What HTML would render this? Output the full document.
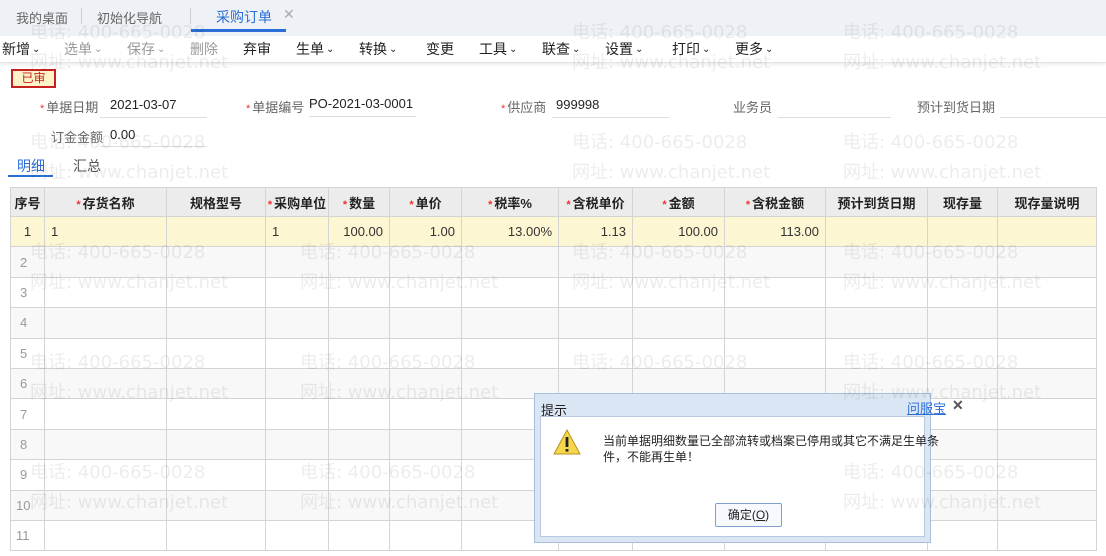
<!DOCTYPE html><html><head><meta charset="utf-8"><style>
*{margin:0;padding:0;box-sizing:border-box}
body{width:1106px;height:556px;overflow:hidden;background:#fff;font-family:"Liberation Sans","Noto Sans CJK SC",sans-serif;font-size:13px;color:#333;position:relative}
.abs{position:absolute;white-space:nowrap}
.wm{position:absolute;font-size:18px;color:rgba(0,0,0,0.075);letter-spacing:0;white-space:nowrap;z-index:5;pointer-events:none;font-family:"DejaVu Sans","Noto Sans CJK SC",sans-serif}
.star{color:#e33;font-size:11px;margin-right:2px}
table{position:absolute;left:10px;top:187px;border-collapse:collapse;table-layout:fixed}
td,th{border:1px solid #d4d4d4;height:30.4px;font-size:13px;padding:0 6px;white-space:nowrap}
th{background:#ececec;font-weight:bold;color:#222;height:29px}
tr.r1 td{background:#fdf6d2}
tr.alt td{background:#f8f8f8}
.num{text-align:right}
.lbl{color:#666}
.uline{position:absolute;height:1px;background:#ddd}
.tb{top:39px;font-size:14px;color:#222}
.tb i{font-style:normal;font-size:10px;vertical-align:2px;margin-left:2px}
</style></head><body>
<div class="abs" style="left:0;top:0;width:1106px;height:36px;background:#eef1f6"></div>
<div class="abs" style="left:16px;top:8px;color:#666">我的桌面</div>
<div class="abs" style="left:81px;top:8px;width:1px;height:16px;background:#ccc"></div>
<div class="abs" style="left:97px;top:8px;color:#666">初始化导航</div>
<div class="abs" style="left:190px;top:8px;width:1px;height:16px;background:#ccc"></div>
<div class="abs" style="left:216px;top:7px;color:#2b6fd6;font-size:14px">采购订单</div>
<div class="abs" style="left:283px;top:6px;color:#aaa;font-size:14px">✕</div>
<div class="abs" style="left:191px;top:29px;width:95px;height:3px;background:#2b6fd6"></div>
<div class="abs" style="left:0;top:36px;width:1106px;height:27px;background:#fff;border-bottom:1px solid #e4e4e4;box-shadow:0 2px 3px #eee"></div>
<div class="abs tb" style="left:2px">新增<i>⌄</i></div>
<div class="abs tb" style="left:64px;color:#999">选单<i>⌄</i></div>
<div class="abs tb" style="left:127px;color:#999">保存<i>⌄</i></div>
<div class="abs tb" style="left:190px;color:#999">删除</div>
<div class="abs tb" style="left:243px">弃审</div>
<div class="abs tb" style="left:296px">生单<i>⌄</i></div>
<div class="abs tb" style="left:359px">转换<i>⌄</i></div>
<div class="abs tb" style="left:426px">变更</div>
<div class="abs tb" style="left:479px">工具<i>⌄</i></div>
<div class="abs tb" style="left:542px">联查<i>⌄</i></div>
<div class="abs tb" style="left:605px">设置<i>⌄</i></div>
<div class="abs tb" style="left:672px">打印<i>⌄</i></div>
<div class="abs tb" style="left:735px">更多<i>⌄</i></div>
<div class="abs" style="left:11px;top:69px;width:45px;height:19px;border:2px solid #c62020;background:#fdf2c8;color:#c62020;font-size:12px;text-align:center;line-height:15px">已审</div>
<div class="abs lbl" style="left:40px;top:97px"><span class="star">*</span>单据日期</div>
<div class="abs" style="left:110px;top:97px;color:#222">2021-03-07</div><div class="uline" style="left:100px;top:117px;width:107px"></div>
<div class="abs lbl" style="left:246px;top:97px"><span class="star">*</span>单据编号</div>
<div class="abs" style="left:309px;top:96px;color:#222">PO-2021-03-0001</div><div class="uline" style="left:309px;top:116px;width:107px"></div>
<div class="abs lbl" style="left:501px;top:97px"><span class="star">*</span>供应商</div>
<div class="abs" style="left:556px;top:97px;color:#222">999998</div><div class="uline" style="left:552px;top:117px;width:117px"></div>
<div class="abs lbl" style="left:733px;top:97px">业务员</div><div class="uline" style="left:778px;top:117px;width:113px"></div>
<div class="abs lbl" style="left:917px;top:97px">预计到货日期</div><div class="uline" style="left:1000px;top:117px;width:106px"></div>
<div class="abs lbl" style="left:51px;top:127px">订金金额</div>
<div class="abs" style="left:110px;top:127px;color:#222">0.00</div><div class="uline" style="left:100px;top:146px;width:107px"></div>
<div class="abs" style="left:17px;top:156px;color:#2b6fd6;font-size:14px">明细</div>
<div class="abs" style="left:8px;top:175px;width:45px;height:2px;background:#2b6fd6"></div>
<div class="abs" style="left:73px;top:156px;color:#555;font-size:14px">汇总</div>
<table>
<colgroup><col style="width:34px"><col style="width:122px"><col style="width:99px"><col style="width:63px"><col style="width:61px"><col style="width:72px"><col style="width:97px"><col style="width:74px"><col style="width:92px"><col style="width:101px"><col style="width:102px"><col style="width:70px"><col style="width:99px"></colgroup>
<tr><th style="padding:0 2px">序号</th><th><span class="star">*</span>存货名称</th><th>规格型号</th><th style="padding:0 1px"><span class="star">*</span>采购单位</th><th><span class="star">*</span>数量</th><th><span class="star">*</span>单价</th><th><span class="star">*</span>税率%</th><th style="padding:0 2px"><span class="star">*</span>含税单价</th><th><span class="star">*</span>金额</th><th><span class="star">*</span>含税金额</th><th style="padding:0 2px">预计到货日期</th><th>现存量</th><th>现存量说明</th></tr>
<tr class="r1"><td style="text-align:center">1</td><td>1</td><td></td><td>1</td><td class="num">100.00</td><td class="num">1.00</td><td class="num">13.00%</td><td class="num">1.13</td><td class="num">100.00</td><td class="num">113.00</td><td></td><td></td><td></td></tr>
<tr class="alt"><td style="color:#999;padding:0 9px">2</td><td></td><td></td><td></td><td></td><td></td><td></td><td></td><td></td><td></td><td></td><td></td><td></td></tr>
<tr><td style="color:#999;padding:0 9px">3</td><td></td><td></td><td></td><td></td><td></td><td></td><td></td><td></td><td></td><td></td><td></td><td></td></tr>
<tr class="alt"><td style="color:#999;padding:0 9px">4</td><td></td><td></td><td></td><td></td><td></td><td></td><td></td><td></td><td></td><td></td><td></td><td></td></tr>
<tr><td style="color:#999;padding:0 9px">5</td><td></td><td></td><td></td><td></td><td></td><td></td><td></td><td></td><td></td><td></td><td></td><td></td></tr>
<tr class="alt"><td style="color:#999;padding:0 9px">6</td><td></td><td></td><td></td><td></td><td></td><td></td><td></td><td></td><td></td><td></td><td></td><td></td></tr>
<tr><td style="color:#999;padding:0 9px">7</td><td></td><td></td><td></td><td></td><td></td><td></td><td></td><td></td><td></td><td></td><td></td><td></td></tr>
<tr class="alt"><td style="color:#999;padding:0 9px">8</td><td></td><td></td><td></td><td></td><td></td><td></td><td></td><td></td><td></td><td></td><td></td><td></td></tr>
<tr><td style="color:#999;padding:0 9px">9</td><td></td><td></td><td></td><td></td><td></td><td></td><td></td><td></td><td></td><td></td><td></td><td></td></tr>
<tr class="alt"><td style="color:#999;padding:0 5px">10</td><td></td><td></td><td></td><td></td><td></td><td></td><td></td><td></td><td></td><td></td><td></td><td></td></tr>
<tr><td style="color:#999;padding:0 5px">11</td><td></td><td></td><td></td><td></td><td></td><td></td><td></td><td></td><td></td><td></td><td></td><td></td></tr>
</table>
<div class="wm" style="left:30px;top:18px">电话: 400-665-0028</div><div class="wm" style="left:30px;top:48px">网址: www.chanjet.net</div>
<div class="wm" style="left:572px;top:18px">电话: 400-665-0028</div><div class="wm" style="left:572px;top:48px">网址: www.chanjet.net</div>
<div class="wm" style="left:843px;top:18px">电话: 400-665-0028</div><div class="wm" style="left:843px;top:48px">网址: www.chanjet.net</div>
<div class="wm" style="left:30px;top:128px">电话: 400-665-0028</div><div class="wm" style="left:30px;top:158px">网址: www.chanjet.net</div>
<div class="wm" style="left:572px;top:128px">电话: 400-665-0028</div><div class="wm" style="left:572px;top:158px">网址: www.chanjet.net</div>
<div class="wm" style="left:843px;top:128px">电话: 400-665-0028</div><div class="wm" style="left:843px;top:158px">网址: www.chanjet.net</div>
<div class="wm" style="left:30px;top:238px">电话: 400-665-0028</div><div class="wm" style="left:30px;top:268px">网址: www.chanjet.net</div>
<div class="wm" style="left:300px;top:238px">电话: 400-665-0028</div><div class="wm" style="left:300px;top:268px">网址: www.chanjet.net</div>
<div class="wm" style="left:572px;top:238px">电话: 400-665-0028</div><div class="wm" style="left:572px;top:268px">网址: www.chanjet.net</div>
<div class="wm" style="left:843px;top:238px">电话: 400-665-0028</div><div class="wm" style="left:843px;top:268px">网址: www.chanjet.net</div>
<div class="wm" style="left:30px;top:348px">电话: 400-665-0028</div><div class="wm" style="left:30px;top:378px">网址: www.chanjet.net</div>
<div class="wm" style="left:300px;top:348px">电话: 400-665-0028</div><div class="wm" style="left:300px;top:378px">网址: www.chanjet.net</div>
<div class="wm" style="left:572px;top:348px">电话: 400-665-0028</div><div class="wm" style="left:843px;top:348px">电话: 400-665-0028</div><div class="wm" style="left:843px;top:378px">网址: www.chanjet.net</div>
<div class="wm" style="left:30px;top:458px">电话: 400-665-0028</div><div class="wm" style="left:30px;top:488px">网址: www.chanjet.net</div>
<div class="wm" style="left:300px;top:458px">电话: 400-665-0028</div><div class="wm" style="left:300px;top:488px">网址: www.chanjet.net</div>
<div class="wm" style="left:843px;top:458px">电话: 400-665-0028</div><div class="wm" style="left:843px;top:488px">网址: www.chanjet.net</div>
<div class="abs" style="left:534px;top:393px;width:397px;height:150px;background:#dbe6f4;border:1px solid #a9bfdc;z-index:4">
 <div class="abs" style="left:6px;top:6px;font-size:13px;color:#222">提示</div>
 <div class="abs" style="left:372px;top:4px;font-size:13px;color:#2b6fd6;text-decoration:underline">问服宝</div>
 <div class="abs" style="left:417px;top:3px;font-size:14px;color:#555;font-weight:bold">✕</div>
 <div class="abs" style="left:5px;top:22px;width:385px;height:121px;background:#fff;border:1px solid #b8c9e0">
  <svg class="abs" style="left:12px;top:12px" width="28" height="26" viewBox="0 0 28 26"><path d="M14 1 L27 25 L1 25 Z" fill="#f6d64a" stroke="#b89018" stroke-width="1"/><rect x="12.6" y="8" width="2.8" height="10" fill="#222"/><rect x="12.6" y="20" width="2.8" height="2.6" fill="#222"/></svg>
  <div class="abs" style="left:62px;top:16px;font-size:12px;color:#222;line-height:16px">当前单据明细数量已全部流转或档案已停用或其它不满足生单条<br>件，不能再生单！</div>
  <div class="abs" style="left:174px;top:86px;width:67px;height:24px;border:1px solid #7ea0d0;border-radius:2px;background:#f6f9fd;text-align:center;line-height:22px;font-size:12px;color:#222">确定(<u>O</u>)</div>
 </div>
</div>
</body></html>
